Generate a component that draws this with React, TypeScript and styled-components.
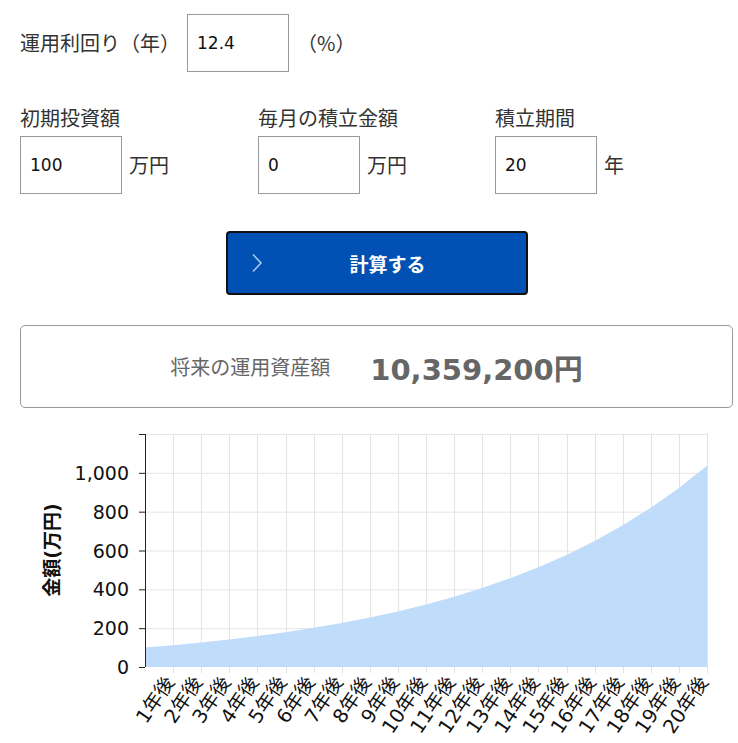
import styled, { createGlobalStyle } from 'styled-components';

const GlobalStyle = createGlobalStyle`
  html, body {
    margin: 0;
    padding: 0;
    background: #fff;
  }
  body {
    font-family: "DejaVu Sans", "Noto Sans CJK JP", sans-serif;
    color: #333;
  }
`;

const Page = styled.div`
  padding: 14px 5px 0 20px;
  box-sizing: border-box;
  width: 738px;
`;

const RateRow = styled.div`
  display: flex;
  align-items: center;
  gap: 7px;
  height: 58px;
`;

const Label = styled.span`
  font-family: "Noto Sans CJK JP", sans-serif;
  font-size: 20px;
  line-height: 24px;
  color: #333;
`;

const Unit = styled(Label)<{ $shift?: number }>`
  margin-left: ${(p) => p.$shift ?? 0}px;
`;

const NumberInput = styled.input`
  width: 102px;
  height: 58px;
  box-sizing: border-box;
  border: 1px solid #9a9a9a;
  border-radius: 0;
  padding: 0 9px;
  font-family: "DejaVu Sans", "Noto Sans CJK JP", sans-serif;
  font-size: 17px;
  color: #111;
  outline: none;
  background: #fff;
`;

const FieldGrid = styled.div`
  display: grid;
  grid-template-columns: 238px 237px auto;
  margin-top: 34px;
`;

const Field = styled.div`
  display: flex;
  flex-direction: column;
  gap: 6px;
`;

const InputRow = styled.div`
  display: flex;
  align-items: center;
  gap: 7px;
`;

const CalcButton = styled.button`
  position: relative;
  display: flex;
  align-items: center;
  justify-content: center;
  width: 302px;
  height: 64px;
  margin: 37px auto 0;
  padding: 0 0 0 22px;
  box-sizing: border-box;
  background: #0051b3;
  border: 2px solid #111;
  border-radius: 4px;
  color: #fff;
  font-family: "Noto Sans CJK JP", sans-serif;
  font-size: 19px;
  font-weight: 700;
  cursor: pointer;
`;

const Chevron = styled.svg`
  position: absolute;
  left: 23px;
  top: 50%;
  transform: translateY(-50%);
`;

const ResultBox = styled.div`
  display: flex;
  align-items: center;
  justify-content: center;
  gap: 40px;
  height: 83px;
  margin-top: 30px;
  box-sizing: border-box;
  border: 1px solid #9a9a9a;
  border-radius: 5px;
`;

const ResultLabel = styled.span`
  font-family: "Noto Sans CJK JP", sans-serif;
  font-size: 20px;
  color: #666;
`;

const ResultAmount = styled.span`
  font-family: "DejaVu Sans", "Noto Sans CJK JP", sans-serif;
  font-size: 29px;
  font-weight: 700;
  color: #666;
`;

const ChartSvg = styled.svg`
  display: block;
  margin-top: 12px;
  font-family: "DejaVu Sans", "Noto Sans CJK JP", sans-serif;
`;

const LEFT = 125;
const RIGHT = 687;
const TOP = 14;
const BOTTOM = 247;
const MAX = 1200;
const STEP = (RIGHT - LEFT) / 20;

const yOf = (v: number) => BOTTOM - (v * (BOTTOM - TOP)) / MAX;

const values = Array.from({ length: 21 }, (_, k) => 100 * Math.pow(1.124, k));

const Chart = () => {
  const pts = values.map((v, k) => `${LEFT + STEP * k},${yOf(v)}`).join(' L');
  const area = `M${LEFT},${BOTTOM} L${pts} L${RIGHT},${BOTTOM} Z`;
  const yTicks = [0, 200, 400, 600, 800, 1000, 1200];
  return (
    <ChartSvg width={718} height={323}>
      {yTicks.slice(1).map((t) => (
        <line key={t} x1={LEFT} x2={RIGHT} y1={yOf(t) + 0.5} y2={yOf(t) + 0.5} stroke="#e6e6e6" />
      ))}
      {values.slice(1).map((_, i) => {
        const x = Math.round(LEFT + STEP * (i + 1)) + 0.5;
        return <line key={i} x1={x} x2={x} y1={TOP} y2={BOTTOM + 6} stroke="#e3e3e3" />;
      })}
      <path d={area} fill="#bfdcfb" />
      <line x1={LEFT + 0.5} x2={LEFT + 0.5} y1={TOP} y2={BOTTOM} stroke="#222" />
      {yTicks.map((t) => (
        <g key={t}>
          <line x1={LEFT - 6} x2={LEFT} y1={yOf(t) + 0.5} y2={yOf(t) + 0.5} stroke="#222" />
          {t < 1200 && (
            <text x={109} y={yOf(t) + 7} textAnchor="end" fontSize={19} fill="#111">
              {t.toLocaleString('en-US')}
            </text>
          )}
        </g>
      ))}
      <text
        x={32}
        y={130}
        transform="rotate(-90 32 130)"
        textAnchor="middle"
        dominantBaseline="central"
        fontSize={19}
        fontWeight={700}
        fill="#111"
      >
        金額(万円)
      </text>
      {values.slice(1).map((_, i) => {
        const ax = LEFT + STEP * (i + 1) + 2;
        const ay = 262;
        return (
          <text
            key={i}
            x={ax}
            y={ay}
            textAnchor="end"
            transform={`rotate(-56 ${ax} ${ay})`}
            fontSize={19.5}
            fill="#111"
          >
            {`${i + 1}年後`}
          </text>
        );
      })}
    </ChartSvg>
  );
};

export default function App() {
  return (
    <>
      <GlobalStyle />
      <Page>
        <RateRow>
          <Label>運用利回り（年）</Label>
          <NumberInput defaultValue="12.4" />
          <Unit $shift={1}>（%）</Unit>
        </RateRow>
        <FieldGrid>
          <Field>
            <Label>初期投資額</Label>
            <InputRow>
              <NumberInput defaultValue="100" />
              <Unit>万円</Unit>
            </InputRow>
          </Field>
          <Field>
            <Label>毎月の積立金額</Label>
            <InputRow>
              <NumberInput defaultValue="0" />
              <Unit>万円</Unit>
            </InputRow>
          </Field>
          <Field>
            <Label>積立期間</Label>
            <InputRow>
              <NumberInput defaultValue="20" />
              <Unit>年</Unit>
            </InputRow>
          </Field>
        </FieldGrid>
        <CalcButton type="button">
          <Chevron width="12" height="20" viewBox="0 0 12 20">
            <path d="M2 1.5 L10 10 L2 18.5" fill="none" stroke="#a9c9f2" strokeWidth="1.6" />
          </Chevron>
          計算する
        </CalcButton>
        <ResultBox>
          <ResultLabel>将来の運用資産額</ResultLabel>
          <ResultAmount>10,359,200円</ResultAmount>
        </ResultBox>
        <Chart />
      </Page>
    </>
  );
}
